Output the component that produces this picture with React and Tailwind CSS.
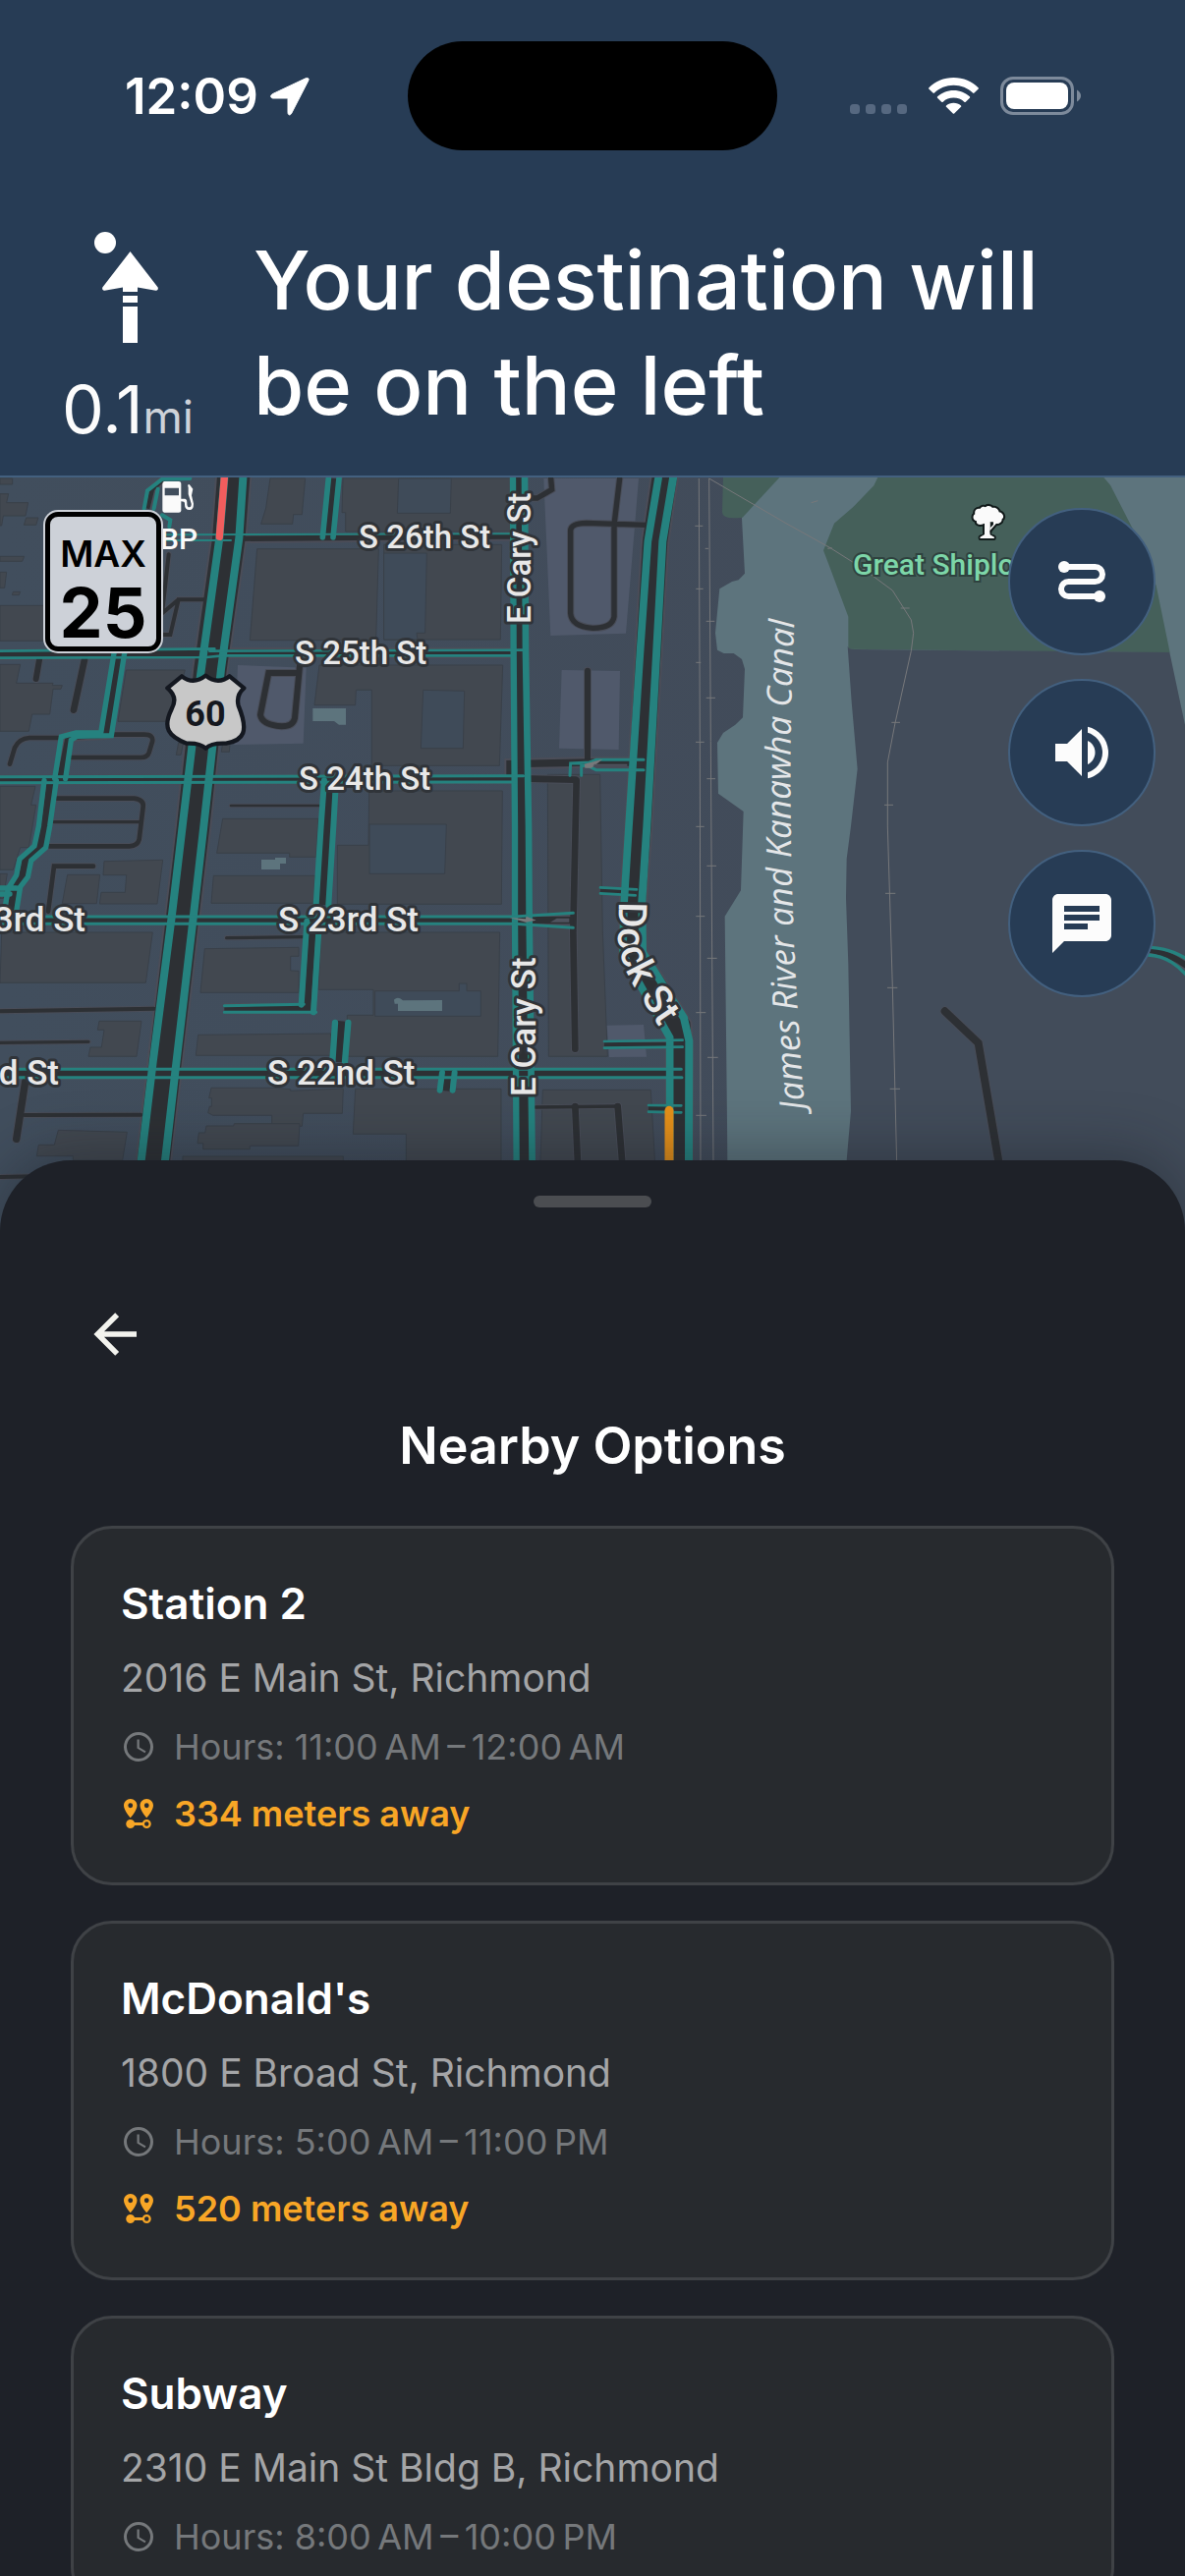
import React from "react";
import { MdVolumeUp, MdChat } from "react-icons/md";

const places = [
  { name: "Station 2", address: "2016 E Main St, Richmond", hours: "Hours: 11:00\u202fAM\u2009–\u200912:00\u202fAM", distance: "334 meters away" },
  { name: "McDonald's", address: "1800 E Broad St, Richmond", hours: "Hours: 5:00\u202fAM\u2009–\u200911:00\u202fPM", distance: "520 meters away" },
  { name: "Subway", address: "2310 E Main St Bldg B, Richmond", hours: "Hours: 8:00\u202fAM\u2009–\u200910:00\u202fPM" },
];

function LocationArrow() {
  return (
    <svg viewBox="0 0 40 40" className="h-10 w-10" fill="#fff" stroke="#fff" strokeWidth="1" aria-hidden="true">
      <path d="M36 1.800 2.300 17.700C-.3 19.300 .3 22 3 22H17.300Q18 22 18 22.800V36.500C18 39.400 20.600 39.800 21.800 37.100L38.800 4C39.900 1.900 38.200 .8 36 1.800Z" />
    </svg>
  );
}

function SignalDots() {
  return (
    <svg viewBox="0 0 58 39" className="h-[39px] w-[58px]" fill="#566880" aria-hidden="true">
      {[0, 16, 32, 48].map((x) => (
        <rect key={x} x={x} y="28" width="10" height="10" rx="3.500" />
      ))}
    </svg>
  );
}

function WifiIcon() {
  return (
    <svg viewBox="0 0 51 37" className="h-[37px] w-[51px]" fill="#fff" aria-hidden="true">
      <path d="M25.500 0C35.500 0 44.500 4 50.600 10.200Q51.200 11 50.500 11.800L46.500 15.600Q45.700 16.200 45 15.500C40 10.700 33 7.700 25.500 7.700S11 10.700 6 15.500Q5.300 16.200 4.500 15.600L.5 11.800Q-.2 11 .4 10.200C6.500 4 15.500 0 25.500 0Z" />
      <path d="M25.500 12.900C32 12.900 37.700 15.400 41.900 19.300Q42.600 20 41.900 20.700L37.800 24.700Q37 25.300 36.300 24.700C33.500 22.100 29.700 20.600 25.500 20.600S17.500 22.100 14.700 24.700Q14 25.300 13.200 24.700L9.100 20.700Q8.400 20 9.100 19.300C13.300 15.400 19 12.900 25.500 12.900Z" />
      <path d="M25.500 25.700C28.400 25.700 31 26.700 33 28.400Q33.700 29 33 29.700L26.200 36.400Q25.500 37 24.800 36.400L18 29.700Q17.300 29 18 28.400C20 26.700 22.600 25.700 25.500 25.700Z" />
    </svg>
  );
}

function BatteryIcon() {
  return (
    <svg viewBox="0 0 82 39" className="h-[39px] w-[82px]" aria-hidden="true">
      <rect x="1.500" y="1.500" width="72" height="36" rx="11.500" fill="none" stroke="#7d8a9b" strokeWidth="3" />
      <rect x="6" y="6" width="63" height="27" rx="8" fill="#fff" />
      <path d="M78 13.500Q82 16 82 19.500T78 25.500Z" fill="#7d8a9b" />
    </svg>
  );
}

function ArriveLeftIcon() {
  return (
    <svg viewBox="0 0 120 120" className="h-[120px] w-[120px]" fill="#fff" aria-hidden="true">
      <circle cx="37" cy="15" r="11" />
      <path d="M62.500 24 90.700 60.500Q91.600 63.500 88.500 63.800L70 60.600V65H55V60.600L36.500 63.800Q33.400 63.500 34.300 60.500Z" />
      <path d="M55 69H70V76H55ZM55 80H70V117H55Z" />
    </svg>
  );
}

function RouteIcon() {
  return (
    <svg viewBox="0 0 60 60" className="h-[60px] w-[60px]" aria-hidden="true">
      <path d="M12 15H43.500a7.500 7.500 0 0 1 0 15H16.500a7.500 7.500 0 0 0 0 15H48" fill="none" stroke="#fcfcfc" strokeWidth="6" />
      <circle cx="12" cy="15" r="6" fill="#fcfcfc" />
      <circle cx="48" cy="45" r="6" fill="#fcfcfc" />
    </svg>
  );
}

function BackIcon() {
  return (
    <svg viewBox="0 0 24 24" className="h-[66px] w-[66px]" fill="#f3f3ee" aria-hidden="true">
      <path d="M20 11V13H8L13.500 18.500 12.080 19.920 4.160 12 12.080 4.080 13.500 5.500 8 11H20Z" />
    </svg>
  );
}

function ClockIcon() {
  return (
    <svg viewBox="0 0 24 24" className="h-9 w-9" fill="currentColor" aria-hidden="true">
      <path d="M12 20A8 8 0 0 0 20 12 8 8 0 0 0 12 4 8 8 0 0 0 4 12 8 8 0 0 0 12 20M12 2A10 10 0 0 1 22 12 10 10 0 0 1 12 22C6.470 22 2 17.500 2 12A10 10 0 0 1 12 2M12.500 7V12.250L17 14.920 16.250 16.150 11 13V7H12.500Z" />
    </svg>
  );
}

function DistanceIcon() {
  return (
    <svg viewBox="0 0 24 24" className="h-9 w-9" fill="currentColor" fillRule="evenodd" aria-hidden="true">
      <path d="M6.500 2C4 2 2 4 2 6.500 2 9.870 6.500 14.860 6.500 14.860S11 9.870 11 6.500C11 4 9 2 6.500 2ZM6.500 4.890A1.610 1.610 0 1 1 6.500 8.110 1.610 1.610 0 1 1 6.500 4.890Z" />
      <path d="M17.500 2C15 2 13 4 13 6.500 13 9.870 17.500 14.860 17.500 14.860S22 9.870 22 6.500C22 4 20 2 17.500 2ZM17.500 4.890A1.610 1.610 0 1 1 17.500 8.110 1.610 1.610 0 1 1 17.500 4.890Z" />
      <path d="M17.500 16C16.230 16 15.100 16.800 14.680 18H9.320C8.900 16.800 7.770 16 6.500 16A3 3 0 1 0 6.500 22C7.770 22 8.900 21.200 9.320 20H14.680C15.100 21.200 16.230 22 17.500 22A3 3 0 1 0 17.500 16ZM17.500 17.500A1.500 1.500 0 1 1 17.500 20.500 1.500 1.500 0 1 1 17.500 17.500Z" />
    </svg>
  );
}

const buildings = [
  "M0 18H38V36H0Z",
  "M0 65H26L20 92H86L78 132H10L5 162H0Z",
  "M80 138H117L110 160H73Z",
  "M0 256H74L68 271H0Z",
  "M0 304H20L14 352H0Z",
  "M40 364H62L58 374H37Z",
  "M0 406H135V514H0Z",
  "M0 586H62L50 643H162L160 650H190L186 661H162L152 738H98L88 790H0Z",
  "M385 603H565L520 760H360Z",
  "M825 18H932L922 128H896L893 157H797L812 108Z",
  "M1047 18H1560V180H1055V122H1044Z",
  "M785 233H1156L1148 512H763Z",
  "M1172 220H1532L1528 510H1172Z",
  "M975 588H1535L1525 895H1135V664H1087L1085 710H960Z",
  "M545 825H560L552 862H538Z",
  "M680 825H702L700 853H676Z",
  "M0 958H108L95 1015H110L88 1145H62L40 1213H0Z",
  "M680 1057H972L965 1174H884V1162H662Z",
  "M1127 972H1534L1531 1318H1030V1138H1125Z",
  "M0 1225H22L10 1300H0Z",
  "M318 1187 497 1183 480 1317H304L309 1282H382L386 1229H315Z",
  "M206 1228H305L295 1316H190Z",
  "M652 1231H962L958 1315H645Z",
  "M5 1404H466L445 1558H0Z",
  "M625 1454 912 1450V1477H887V1521L912 1522V1588H612Z",
  "M980 1404H1526L1520 1783H1060V1657H1140V1579H972Z",
  "M303 1675H432L417 1783H270L276 1755H310L318 1702H298Z",
  "M605 1717 1010 1713V1780H598Z",
  "M645 1879H836L887 1883V1888L1048 1881 1045 1957H926L922 1996H830V1963H650L635 1955 640 1935 646 1936V1910H638Z",
  "M715 1988H915L911 2056H763V2066H620V2048H603L607 2016H626L630 1995H713Z",
  "M1085 1882H1530V2110H1240V2020H1078Z",
  "M178 2008 388 2014 374 2100H223V2087H112L118 2053H166Z",
  "M558 2088H1048V2110H558Z",
  "M1672 922H1832L1840 1400 1855 1783H1675Z",
  "M1657 1885H1987L2000 2110H1650Z",
];

const yards = [
  "M1217 18H1378L1375 124H1213Z",
  "M1172 246H1303L1298 490H1272L1275 510H1172Z",
  "M1292 664 1418 667 1414 842H1285Z",
  "M1128 1074H1363L1358 1225H1128Z",
  "M1145 1583H1402V1560H1425V1583H1468V1660H1145Z",
];

const parking = [
  "M726 588 935 596 926 827 715 831Z",
  "M1660 18H1950L1911 491 1681 498Z",
  "M1715 603 1893 606 1889 846 1707 842Z",
  "M1853 1688 1965 1686 1974 1784 1860 1785Z",
];

/* [path, stroke width] */
const alleys = [
  ["M515 250 495 430 545 388 630 388 545 388 520 495H500", 12],
  ["M120 572 110 630", 18],
  ["M258 572 225 725", 20],
  ["M30 890 45 840Q58 812 90 810H180M225 800H440Q470 800 465 822L455 855Q450 870 430 870H218", 14],
  ["M175 995H410Q440 1000 437 1020L425 1120Q420 1140 395 1141H150", 14],
  ["M165 1067H425", 10],
  ["M915 590 900 750Q895 775 860 775 800 770 795 740L820 612H910", 18],
  ["M705 1017H975", 8],
  ["M285 1202H165L147 1340", 14],
  ["M692 1421 925 1418", 10],
  ["M0 1645 470 1637", 12],
  ["M0 1741 270 1738", 10],
  ["M77 1860 50 2035", 22],
  ["M75 1962 430 1961", 12],
  ["M0 2151 110 2149", 12],
  ["M1615 78H1640L1685 52 1682 18", 16],
  ["M1892 18 1875 160V440Q1870 475 1810 475 1745 470 1742 430V175Q1745 155 1790 154L1972 160", 16],
  ["M1794 605V890", 18],
  ["M1620 935 1757 938M1760 940 1750 1400 1756 1760", 20],
  ["M1635 1938 1890 1935", 10],
  ["M1756 1935 1764 2110M1886 1935 1900 2110", 20],
  ["M2885 1645 2987 1742 3050 2110", 24],
];

/* [centre line, width] of the dark carriageways that carry traffic lines */
const roads = [
  ["M714 0 698 205 642 600 590 1080 558 1350 502 1820 468 2110", 100],
  ["M1584 0 1588 550 1594 1080 1596 1400 1601 2110", 44],
  ["M2031 0 2000 210 1977 600 1950 1080 1932 1320 1932 1470 2010 1590 2070 1690 2074 1760V2110", 76],
  ["M720 202 1560 195", 16],
  ["M0 556 650 551 1570 551", 22],
  ["M0 938 1575 936", 18],
  ["M0 1367H1560L1750 1367", 22],
  ["M0 1835H2080", 26],
  ["M364 552 324 800 210 806 184 935", 20],
  ["M154 940 136 1080 122 1142 78 1182 68 1234 44 1268 33 1340", 22],
  ["M1019 18 1001 200", 18],
  ["M1007 940 999 1080 984 1320", 24],
  ["M956 1370 938 1636 685 1637", 22],
  ["M1043 1675 1033 1800", 24],
  ["M1368 1830 1362 1888", 22],
  ["M1833 1277 1940 1282M1845 1747H2085M1980 1942H2080", 14],
  ["M1557 925V890L1800 885H1965", 22],
  ["M450 110 465 50 500 20", 14],
  ["M3500 1455C3560 1465 3600 1485 3640 1520", 18],
];

const traffic = [
  ["M685 18 670 200 612 620 557 1080 525 1350 467 1800 430 2110", 24],
  ["M742 18 730 200 675 600 622 1080 590 1360 535 1830 503 2110", 24],
  ["M1566 18 1568 550 1572 1080V1360L1577 2110", 19],
  ["M1602 18 1605 550 1614 1080 1616 1360 1625 2110", 20],
  ["M2010 18 1978 210 1955 540 1920 1080 1905 1320 1902 1470 1980 1610 2045 1725V2110", 23],
  ["M2055 18 2023 210 2005 540 1975 1080 1960 1310 1962 1465 2040 1590 2088 1665 2104 1735 2103 2110", 24],
  ["M500 190 1560 187M500 207H705", 6],
  ["M0 545 655 538M640 545 1595 542M0 566 630 564 680 559H1570", 8],
  ["M0 929 1598 926M0 947 1570 945", 9],
  ["M0 1356H1570L1750 1345M0 1378H1570L1750 1390", 9],
  ["M0 1822H2080M0 1847H2082", 9],
  ["M348 552 308 795 232 795 187 807 167 935M380 552 340 803 235 805 217 817 200 935", 16],
  ["M135 940 118 1080 105 1140 60 1180 50 1230 25 1270 15 1330M172 940 152 1080 140 1145 95 1185 85 1235 62 1265 50 1340M0 1269H50M0 1287H30", 16],
  ["M580 18 495 20 450 55 440 110M482 50 470 110M495 130 520 145 517 165", 12],
  ["M1003 18 985 198M1035 18 1017 198", 17],
  ["M990 940 980 1080 965 1320M1024 975 1018 1080 1003 1320", 18],
  ["M937 1370 920 1625M975 1370 957 1648", 18],
  ["M685 1628 928 1624M685 1648H965", 9],
  ["M1023 1680 1015 1800M1063 1680 1053 1800", 19],
  ["M1350 1832 1343 1886M1388 1832 1382 1886", 18],
  ["M1833 1267 1944 1273M1833 1285 1940 1291M1845 1737 2084 1733M1845 1757 2084 1754M1980 1932 2080 1933M1980 1952 2080 1954", 8],
  ["M1740 925 1742 888 1800 885 1820 877H1965M1775 925V893L1800 898 1820 908H1965", 9],
  ["M3515 1450C3570 1455 3600 1470 3640 1495M3505 1473C3560 1475 3600 1505 3640 1555", 10],
];

const halo = "fill-[#e8e8e8] stroke-[#303439] stroke-[6px] [paint-order:stroke] [stroke-linejoin:round] font-['Roboto',sans-serif] font-medium";

function CityMap() {
  return (
    <svg
      viewBox="0 485 1206 775"
      preserveAspectRatio="xMidYMin slice"
      className="block h-[775px] w-full"
      role="img"
      aria-label="Map of Richmond around E Cary St and Dock St"
    >
      <defs>
        <linearGradient id="land" x1="0" x2="1" y1="0" y2="0">
          <stop offset="0" stopColor="#414e5d" />
          <stop offset="1" stopColor="#424a58" />
        </linearGradient>
        <path id="dock-line" d="M630 917 629 956Q631 978 645 1002L667 1038Q681 1058 688 1100" />
        <path id="canal-line" d="M819 1128Q794 830 812 570" />
      </defs>
      <rect x="0" y="485" width="1206" height="775" fill="url(#land)" />
      <g transform="translate(0 480) scale(.33333)">
        <g fill="#424850" stroke="#394049" strokeWidth="3">
          {buildings.map((d) => <path key={d} d={d} />)}
        </g>
        <g fill="#3f4b59" stroke="#394049" strokeWidth="3">
          {yards.map((d) => <path key={d} d={d} />)}
        </g>
        <g fill="#50596b">
          {parking.map((d) => <path key={d} d={d} />)}
        </g>
        <g fill="#5d747d">
          <path d="M2200 15H3730V2340H2223L2220 1985 2213 1355 2262 1276 2270 1035 2193 980 2190 825 2208 795 2245 770 2268 748 2274 600 2265 570 2240 552H2210L2190 542 2184 490 2197 355 2235 333 2255 328 2274 308 2265 140 2260 15Z" />
          <path d="M955 720H1056V770H1035L1020 759H955Z" />
          <path d="M798 1182H840V1176H873V1194H855V1212H798Z" />
          <path d="M1203 1610Q1215 1598 1230 1612L1350 1611V1644H1215V1622H1205Z" />
        </g>
        <g fill="#45605a">
          <path d="M2208 15H2380L2267 137Q2205 145 2205 120Z" />
          <path d="M2680 15H3370L3390 38 3460 175 3530 345 3572 550 2590 539V440L2530 280 2514 238 2547 155 2605 105 2668 40Z" />
        </g>
        <path d="M2588 530Q2590 540 2610 540L3571 549 3618 770V2340H2580L2585 2100 2598 1950 2590 1500 2583 1300 2585 1180 2598 1080 2618 905 2600 700Z" fill="#424c5a" />
        <g fill="none" stroke="#76777a" strokeWidth="3">
          <path d="M2134 18 2137 820 2139 2110M2165 18 2170 820 2178 2110" />
          <path d="M2122 163H2146M2153 232H2163M2125 355H2147M2156 454H2182M2125 580H2140M2156 688H2184M2124 823H2150M2158 935H2184M2125 1081H2150M2158 1201H2187M2125 1355H2152M2159 1483H2189M2125 1649H2155M2160 1786H2192M2125 1963H2157" />
          <path d="M2165 18 2400 155 2535 230 2630 290 2725 360 2782 450 2789 490 2782 545 2733 765 2710 885V1080L2725 1570 2738 2110" />
          <path d="M2477 92 2497 86M2527 232 2540 230M2750 414H2777M2722 763H2748M2700 1015H2727M2703 1285H2734M2709 1573H2740M2717 1882H2748" />
        </g>
        <g fill="none" strokeLinecap="round">
          {alleys.map(([d, w]) => <path key={d} d={d} stroke="#494d58" strokeWidth={w + 6} />)}
          {roads.map(([d, w]) => <path key={d} d={d} stroke="#4b4d58" strokeWidth={w + 12} strokeLinecap="butt" />)}
          {alleys.map(([d, w]) => <path key={d} d={d} stroke="#2d3034" strokeWidth={w} />)}
          {roads.map(([d, w]) => <path key={d} d={d} stroke="#2d3034" strokeWidth={w} strokeLinecap="butt" />)}
          {traffic.map(([d, w]) => <path key={d} d={d} stroke="#25827f" strokeWidth={w} />)}
          <path d="M685 15 670 196" stroke="#f15d5d" strokeWidth="22" />
          <path d="M2043 1948V2110" stroke="#e59019" strokeWidth="27" />
        </g>
        <path d="M1784 890 1840 875 1806 902H1786ZM1555 1359 1605 1363 1607 1355 1637 1367 1605 1373Z" fill="#77797b" />
        <path d="M1815 890H1915V896H1810ZM1700 1361H1738V1373H1680Z" fill="#4f535e" />
        {/* US route shield */}
        <path d="M555 622Q590 650 628 620 665 650 701 622L745 658Q720 680 728 712C760 790 745 818 690 827Q645 825 628 842 610 825 570 827C515 805 495 780 524 722Q545 685 511 658Z" fill="#c8c8c8" stroke="#141820" strokeWidth="13" strokeLinejoin="round" />
        {/* fuel pump */}
        <path fillRule="evenodd" d="M502 27H546Q553 27 553 35V80H565Q572 82 571 95 571 106 579 106 585 105 584 95L575 66V46L573 38 578 36 589 50 585 70 591 95Q591 115 578 114 563 113 564 95 564 88 553 88V117Q552 122 546 122H502Q496 122 496 115V35Q496 28 502 27ZM503 47V70H546V47Z" fill="#fafafa" />
        {/* park tree: trunk, then crown */}
        <g fill="#fafafa" stroke="#111a1a" strokeWidth="12" strokeLinejoin="round" className="[paint-order:stroke]">
          <path d="M3006 145H3022V190L3035 197V201H2993V197L3006 190Z" />
          <path d="M3004 156C2990 163 2979 156 2982 148 2968 146 2970 130 2977 127 2974 115 2983 109 2992 111 2997 103 3005 103 3009 106 3015 99 3026 101 3030 108 3039 106 3049 112 3050 121 3064 123 3067 138 3059 142 3060 152 3048 158 3042 155L3022 178V150Z" />
          <path d="M3006 150H3022V190L3035 197V201H2993V197L3006 190Z" stroke="none" />
          <path d="M3024 151H3033V159L3024 168Z" fill="#111a1a" stroke="none" />
        </g>
      </g>
      <g className={halo} fontSize="33">
        <text x="365" y="557">S 26th St</text>
        <text x="300" y="675">S 25th St</text>
        <text x="304" y="803">S 24th St</text>
        <text transform="translate(540 634) rotate(-90)">E Cary St</text>
      </g>
      <g className={halo} fontSize="35">
        <text x="283" y="947">S 23rd St</text>
        <text x="87" y="947" textAnchor="end">S 23rd St</text>
        <text x="272" y="1103">S 22nd St</text>
        <text x="60" y="1103" textAnchor="end">S 22nd St</text>
        <text transform="translate(545 1115) rotate(-90)">E Cary St</text>
      </g>
      <text className={halo} fontSize="40"><textPath href="#dock-line">Dock St</textPath></text>
      <text x="868" y="584" fontSize="30" className="fill-[#7dd6a8] stroke-[#2f423f] stroke-[4px] [paint-order:stroke] font-['Roboto',sans-serif] font-medium">Great Shiplock Park</text>
      <text x="163" y="558" fontSize="30" className="fill-[#fafafa] font-['Roboto',sans-serif] font-medium">BP</text>
      <text x="209" y="738" fontSize="36" textAnchor="middle" className="fill-[#15181f] font-['Roboto',sans-serif] font-bold">60</text>
      <text fontSize="35" className="fill-[#e4e6e8] font-['Open_Sans',sans-serif] italic">
        <textPath href="#canal-line">James River and Kanawha Canal</textPath>
      </text>
    </svg>
  );
}

function RoundButton({ label, children }) {
  return (
    <button
      type="button"
      aria-label={label}
      className="flex h-[150px] w-[150px] items-center justify-center rounded-full border-2 border-[#43607f] bg-[#273c55] text-[72px] text-[#fcfcfc]"
    >
      {children}
    </button>
  );
}

function PlaceCard({ place }) {
  return (
    <li>
      <button type="button" className="flex w-full flex-col gap-6 rounded-[42px] border-3 border-[#3f4246] bg-[#272a2e] p-12 text-left">
        <span className="text-[44px] leading-[56px] font-semibold text-white">{place.name}</span>
        <span className="text-[39px] leading-[48px] text-[#a4a5a7]">{place.address}</span>
        <span className="flex items-center gap-[18px] text-[36px] leading-[44px] text-[#75787b]">
          <ClockIcon />
          {place.hours}
        </span>
        {place.distance && (
          <span className="flex items-center gap-[18px] text-[36px] leading-[44px] font-semibold text-[#f8a626]">
            <DistanceIcon />
            {place.distance}
          </span>
        )}
      </button>
    </li>
  );
}

export default function App() {
  return (
    <div className="flex h-screen w-full flex-col overflow-hidden bg-[#1e2128] font-['Inter',sans-serif]">
      <header className="shrink-0 border-b-2 border-[#43607f] bg-[#273c55] pb-5 text-white">
        <div className="grid grid-cols-[1fr_376px_1fr] pt-[42px]">
          <div className="flex items-center gap-3 pl-[127px]">
            <time className="text-[51px] leading-[60px] font-semibold">12:09</time>
            <LocationArrow />
          </div>
          <div className="h-[111px] rounded-full bg-black" />
          <div className="flex items-center justify-end gap-[22px] pr-[106px]">
            <SignalDots />
            <WifiIcon />
            <BatteryIcon />
          </div>
        </div>
        <div className="mt-[79px] flex gap-[58px] pl-[60px]">
          <div className="flex w-[140px] flex-col items-center">
            <ArriveLeftIcon />
            <p className="mt-6 flex items-baseline whitespace-nowrap text-[68px] leading-[80px] text-[#fcfcfc]">
              0.1<span className="text-[46px] text-[#ced2d9]">mi</span>
            </p>
          </div>
          <h1 className="text-[83px] leading-[107px] font-medium">
            Your destination will<br />be on the left
          </h1>
        </div>
      </header>

      <main className="flex min-h-0 flex-1 flex-col">
        <section className="relative shrink-0">
          <CityMap />
          <div className="absolute top-[33px] left-[44px] rounded-[15px] bg-[#cdd1d8] p-[2px]">
            <div className="flex h-[142px] w-[118px] flex-col items-center rounded-[13px] border-5 border-black pt-4 text-black">
              <span className="text-[37px] leading-[44px] font-semibold">MAX</span>
              <span className="text-[70px] leading-[76px] font-bold">25</span>
            </div>
          </div>
          <div className="absolute top-[31px] right-[30px] flex flex-col gap-6">
            <RoundButton label="Route overview"><RouteIcon /></RoundButton>
            <RoundButton label="Sound"><MdVolumeUp /></RoundButton>
            <RoundButton label="Feedback"><MdChat /></RoundButton>
          </div>
        </section>

        <section className="relative -mt-20 flex flex-1 flex-col rounded-t-[72px] bg-[#1e2128] px-[72px] pt-9 shadow-[0_-6px_60px_rgba(20,24,32,0.4)]">
          <div className="h-3 w-[120px] shrink-0 self-center rounded-full bg-[#4b4d51]" />
          <button type="button" aria-label="Back" className="mt-24 ml-3 self-start">
            <BackIcon />
          </button>
          <h2 className="mt-12 text-center text-[52px] leading-[66px] font-semibold text-white">Nearby Options</h2>
          <ul className="mt-12 flex flex-col gap-9">
            {places.map((place) => <PlaceCard key={place.name} place={place} />)}
          </ul>
        </section>
      </main>
    </div>
  );
}
